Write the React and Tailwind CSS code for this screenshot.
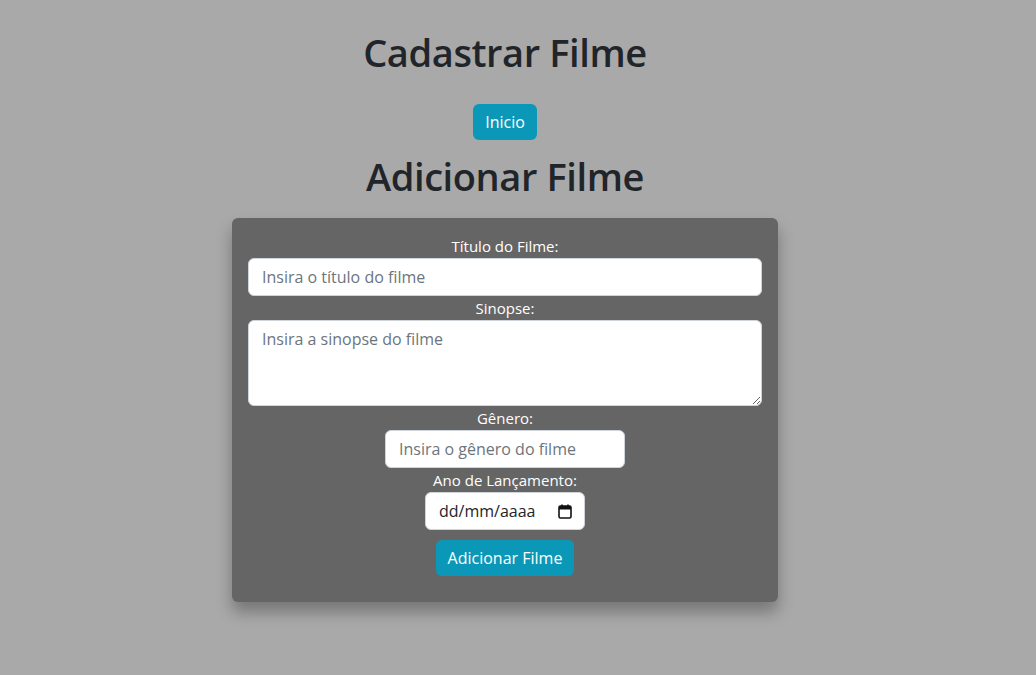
export default function App() {
    const font = { fontFamily: '"Open Sans", "Noto Sans", sans-serif' };

    return (
        <div className="min-h-screen bg-[#a9a9a9] text-[#212529] pt-[28px]" style={font}>
            <div className="w-[1010px]">
                <div className="flex flex-col items-center">
                    <h1 className="text-[38px] leading-[48px] font-semibold tracking-[-0.4px] mb-2">Cadastrar Filme</h1>
                    <button className="bg-[#0b98b8] text-white text-base leading-6 px-3 py-[6px] rounded-md mt-[20px]">Inicio</button>
                    <h1 className="text-[38px] leading-[48px] font-semibold tracking-[-0.4px] mt-[12px]">Adicionar Filme</h1>
                </div>

                <div className="mx-auto mt-[18px] w-[546px] bg-[#656565] rounded-md shadow-[0_10px_16px_rgba(0,0,0,0.3)] px-4 pt-4 pb-[26px] flex flex-col items-center text-white">
                    <label className="leading-6 text-[15px]">Título do Filme:</label>
                    <input
                        className="w-full h-[38px] bg-white rounded-md border border-[#ced4da] px-[13px] text-base text-[#212529] placeholder:text-[#6c757d] outline-none"
                        placeholder="Insira o título do filme"
                    />
                    <label className="leading-6 text-[15px]">Sinopse:</label>
                    <textarea
                        className="w-full h-[86px] bg-white rounded-md border border-[#ced4da] px-[13px] py-[6px] text-base text-[#212529] placeholder:text-[#6c757d] outline-none resize-y"
                        placeholder="Insira a sinopse do filme"
                    />
                    <label className="leading-6 text-[15px]">Gênero:</label>
                    <input
                        className="w-[240px] h-[38px] bg-white rounded-md border border-[#ced4da] px-[13px] text-base text-[#212529] placeholder:text-[#6c757d] outline-none"
                        placeholder="Insira o gênero do filme"
                    />
                    <label className="leading-6 text-[15px]">Ano de Lançamento:</label>
                    <div className="w-[160px] h-[38px] bg-white rounded-md border border-[#ced4da] pl-[13px] pr-[12px] flex items-center justify-between text-base text-[#212529]">
                        <span>dd/mm/aaaa</span>
                        <svg width="14" height="15" viewBox="0 0 14 15" fill="none">
                            <rect x="1" y="2" width="12" height="12" rx="1.5" stroke="#111" strokeWidth="1.6" />
                            <rect x="1" y="2" width="12" height="3.5" fill="#111" />
                            <line x1="4" y1="0.5" x2="4" y2="3" stroke="#111" strokeWidth="1.6" />
                            <line x1="10" y1="0.5" x2="10" y2="3" stroke="#111" strokeWidth="1.6" />
                        </svg>
                    </div>
                    <button className="mt-[10px] bg-[#0b98b8] text-white text-base leading-6 px-3 py-[6px] rounded-md">Adicionar Filme</button>
                </div>
            </div>
        </div>
    );
}
